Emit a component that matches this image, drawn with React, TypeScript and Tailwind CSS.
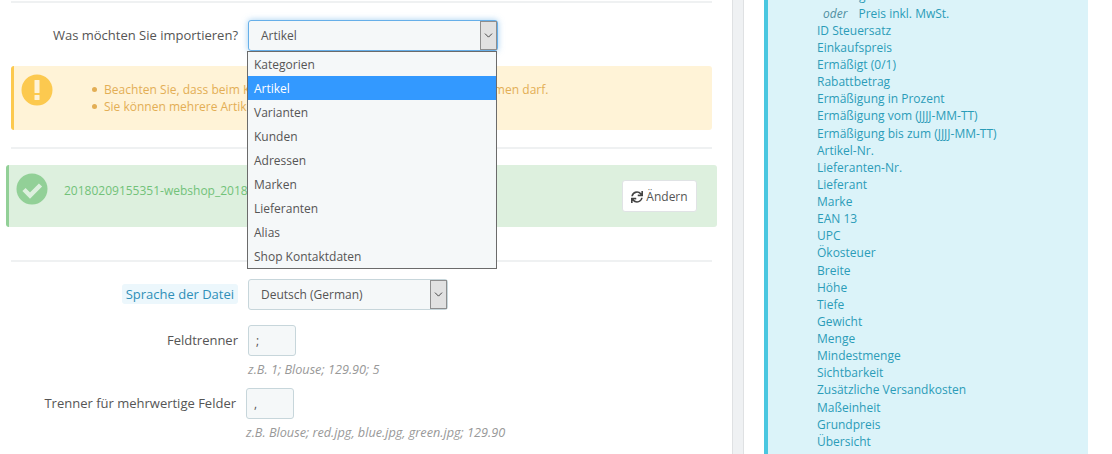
import React from 'react';
import { ChevronDown } from 'lucide-react';
import { FaSync } from 'react-icons/fa';

const options = ['Kategorien', 'Artikel', 'Varianten', 'Kunden', 'Adressen', 'Marken', 'Lieferanten', 'Alias', 'Shop Kontaktdaten'];

const fields = [
  'ID Steuersatz', 'Einkaufspreis', 'Ermäßigt (0/1)', 'Rabattbetrag', 'Ermäßigung in Prozent',
  'Ermäßigung vom (JJJJ-MM-TT)', 'Ermäßigung bis zum (JJJJ-MM-TT)', 'Artikel-Nr.', 'Lieferanten-Nr.',
  'Lieferant', 'Marke', 'EAN 13', 'UPC', 'Ökosteuer', 'Breite', 'Höhe', 'Tiefe', 'Gewicht', 'Menge',
  'Mindestmenge', 'Sichtbarkeit', 'Zusätzliche Versandkosten', 'Maßeinheit', 'Grundpreis', 'Übersicht',
];

const SelectBox: React.FC<{ value: string; width: string; focused?: boolean }> = ({ value, width, focused }) => (
  <div
    className={`flex h-[31px] items-stretch rounded-[3px] border bg-[#f5f8f9] text-[12px] text-[#555] ${width} ${
      focused ? 'border-[#66afe9] shadow-[0_0_6px_rgba(102,175,233,0.6)]' : 'border-[#c7d6db]'
    }`}
  >
    <span className="flex flex-1 items-center pl-3">{value}</span>
    <span className="flex w-[17px] items-center justify-center border border-[#8e8e8e] bg-[#e1e1e1] text-[#222]">
      <ChevronDown size={13} strokeWidth={1.5} />
    </span>
  </div>
);

const Divider = () => <div className="mx-[11px] h-[2px] w-[701px] bg-[#eff1f2]" />;

export default function App() {
  return (
    <div className="flex h-[454px] w-[1112px] overflow-hidden bg-white text-[13px] text-[#555]" style={{ fontFamily: '"Open Sans", sans-serif' }}>
      <div className="relative w-[732px] shrink-0 pt-[1px]">
        <Divider />

        <div className="mt-[17px] flex items-center">
          <label className="w-[238px] text-right">Was möchten Sie importieren?</label>
          <div className="ml-[10px]">
            <SelectBox value="Artikel" width="w-[250px]" focused />
          </div>
        </div>

        {/* open dropdown list */}
        <div className="absolute left-[247px] top-[51px] z-10 w-[250px] border border-[#6b6b6b] bg-[#f5f8f9] text-[12px] text-[#555]">
          {options.map(o => (
            <div key={o} className={`flex h-[24px] items-center pl-[6px] pt-[1px] ${o === 'Artikel' ? 'bg-[#3399ff] text-white' : ''}`}>
              {o}
            </div>
          ))}
        </div>

        <div className="mx-[11px] mt-[15px] flex h-[64px] w-[701px] rounded-[3px] border-l-[3px] border-[#fcc94f] bg-[#fff3d7] text-[#e3ae55]">
          <svg width="32" height="32" viewBox="0 0 32 32" className="ml-[7px] mt-[8px] shrink-0">
            <circle cx="16" cy="16" r="15.5" fill="#fcc94f" />
            <rect x="13.5" y="6" width="5" height="13" rx="0.5" fill="#fff3d7" />
            <rect x="13.5" y="21" width="5" height="5" rx="0.5" fill="#fff3d7" />
          </svg>
          <ul className="ml-[39px] mt-[15px] text-[12px] leading-[17px]">
            <li className="flex items-center whitespace-nowrap tracking-[0.03px]">
              <span className="mr-[7px] h-[5px] w-[5px] rounded-full bg-[#e3ae55]" />
              Beachten Sie, dass beim Kategorienimport keine Kategorie gleiche Namen darf.
            </li>
            <li className="flex items-center whitespace-nowrap">
              <span className="mr-[7px] h-[5px] w-[5px] rounded-full bg-[#e3ae55]" />
              Sie können mehrere Artikel importieren.
            </li>
          </ul>
        </div>

        <div className="mt-[17px]"><Divider /></div>

        <div className="mx-[6px] mt-[16px] flex h-[62px] w-[711px] rounded-[3px] border-l-[3px] border-[#92d097] bg-[#ddf0de] text-[#72c279]">
          <svg width="32" height="32" viewBox="0 0 32 32" className="ml-[7px] mt-[8px] shrink-0">
            <circle cx="16" cy="16" r="15.5" fill="#92d097" />
            <path d="M8 16.5l6 6L24.5 12" fill="none" stroke="#ddf0de" strokeWidth="4.5" />
          </svg>
          <span className="ml-[16px] mt-[17px] whitespace-nowrap text-[12px]">20180209155351-webshop_2018.csv</span>
          <button className="ml-auto mr-[20px] mt-[15px] flex h-[32px] w-[75px] items-center justify-center gap-[3px] rounded-[3px] border border-[#e0e3e5] bg-white pt-[1px] text-[12px] text-[#555]">
            <FaSync size={12} className="text-[#444]" />
            Ändern
          </button>
        </div>

        <div className="mt-[33px]"><Divider /></div>

        <div className="mt-[17px] flex items-center">
          <div className="w-[238px] text-right">
            <span className="rounded-[3px] bg-[#ecf7fc] px-[4px] py-[1px] text-[#2f8fb8]">Sprache der Datei</span>
          </div>
          <div className="ml-[10px]">
            <SelectBox value="Deutsch (German)" width="w-[200px]" />
          </div>
        </div>

        <div className="mt-[15px] flex items-center">
          <label className="w-[238px] text-right">Feldtrenner</label>
          <div className="ml-[10px] flex h-[31px] w-[48px] items-center rounded-[3px] border border-[#c7d6db] bg-[#f5f8f9] pl-[7px] text-[12px]">;</div>
        </div>
        <p className="ml-[248px] mt-[5px] text-[12.7px] italic leading-[17px] text-[#999]">z.B. 1; Blouse; 129.90; 5</p>

        <div className="mt-[10px] flex items-center">
          <label className="w-[236px] text-right">Trenner für mehrwertige Felder</label>
          <div className="ml-[10px] flex h-[31px] w-[48px] items-center rounded-[3px] border border-[#c7d6db] bg-[#f5f8f9] pl-[7px] text-[12px]">,</div>
        </div>
        <p className="ml-[246px] mt-[5px] text-[12.7px] italic leading-[17px] text-[#999]">z.B. Blouse; red.jpg, blue.jpg, green.jpg; 129.90</p>
      </div>

      <div className="w-[12px] shrink-0 border-x border-[#dfe1e3] bg-[#eff1f3]" />

      <div className="flex-1 pl-[20px] pr-[24px]">
        <div className="h-full overflow-hidden border-l-[4px] border-[#4ac7e0] bg-[#dbf3f9] pl-[49px] text-[12px] leading-[17.13px] text-[#2b9cb8]">
          <div className="-mt-[13.4px]">
            <div>Preis zzgl. MwSt.</div>
            <div className="mt-[1px] whitespace-nowrap">
              <i className="ml-[6px] mr-[11px] text-[#4f8ea0]">oder</i>Preis inkl. MwSt.
            </div>
            {fields.map(f => (
              <div key={f} className="whitespace-nowrap">{f}</div>
            ))}
          </div>
        </div>
      </div>
    </div>
  );
}
